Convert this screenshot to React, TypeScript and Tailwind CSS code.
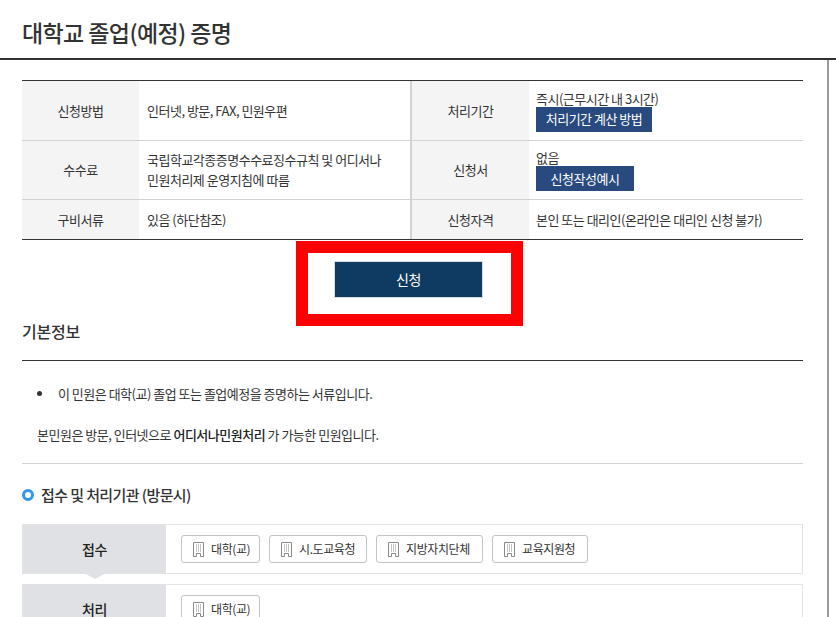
import type { ReactNode } from "react";

const fontStack = { fontFamily: '"Noto Sans CJK KR", "Noto Sans", sans-serif' };

const BuildingIcon = () => (
  <svg width="11" height="15" viewBox="0 0 11 15" fill="none" className="shrink-0">
    <path d="M0.5 14.5V0.5H10.5V14.5H7.5V11.5H3.5V14.5Z" stroke="#8a8a8a" />
    <path
      d="M3 3h1M5 3h1M7 3h1M3 5h1M5 5h1M7 5h1M3 7h1M5 7h1M7 7h1M3 9h1M5 9h1M7 9h1"
      stroke="#8a8a8a"
    />
  </svg>
);

const OrgButton = ({ label, width }: { label: string; width: string }) => (
  <div
    className={`flex h-[28px] items-center gap-[7px] rounded-[3px] border border-[#c4c4c4] bg-white pl-[11px] text-[12px] tracking-[-0.4px] text-[#333] ${width}`}
  >
    <BuildingIcon />
    <span className="leading-none">{label}</span>
  </div>
);

const InfoRow = ({
  height,
  leftLabel,
  left,
  rightLabel,
  right,
  last,
}: {
  height: string;
  leftLabel: string;
  left: ReactNode;
  rightLabel: string;
  right: ReactNode;
  last?: boolean;
}) => (
  <div className={`flex ${height} ${last ? "" : "border-b border-[#d2d2d2]"}`}>
    <div className="flex w-[117px] items-center justify-center bg-[#f4f4f4]">{leftLabel}</div>
    <div className="flex w-[273px] items-center border-r-2 border-[#d2d2d2] pl-[8px]">{left}</div>
    <div className="flex w-[117px] items-center justify-center bg-[#f4f4f4]">{rightLabel}</div>
    <div className="flex flex-1 items-center pl-[7px]">{right}</div>
  </div>
);

const NavyTag = ({ label, width }: { label: string; width: string }) => (
  <div
    className={`flex h-[25px] items-center justify-center bg-[#284a7e] text-[13px] text-white ${width}`}
  >
    {label}
  </div>
);

export default function App() {
  return (
    <div
      style={fontStack}
      className="relative h-[617px] w-[836px] overflow-hidden bg-white text-[13px] tracking-[-0.5px] text-[#333]"
    >
      <div className="flex h-[60px] items-start border-b-2 border-[#333] pl-[22px] pt-[14px]">
        <h1 className="text-[23px] leading-[36px] font-medium tracking-[-0.6px]">
          대학교 졸업(예정) 증명
        </h1>
      </div>

      <div className="h-[557px] w-[829px] border-r-2 border-[#9a9a9a] pl-[22px] pr-[24px] pt-[20px]">
        <div className="border-y border-[#333]">
          <InfoRow
            height="h-[60px]"
            leftLabel="신청방법"
            left="인터넷, 방문, FAX, 민원우편"
            rightLabel="처리기간"
            right={
              <div className="flex flex-col items-start">
                <span className="leading-[17px]">즉시(근무시간 내 3시간)</span>
                <NavyTag label="처리기간 계산 방법" width="w-[116px]" />
              </div>
            }
          />
          <InfoRow
            height="h-[59px]"
            leftLabel="수수료"
            left={
              <span className="leading-[20px]">
                국립학교각종증명수수료징수규칙 및 어디서나
                <br />
                민원처리제 운영지침에 따름
              </span>
            }
            rightLabel="신청서"
            right={
              <div className="flex flex-col items-start">
                <span className="leading-[17px]">없음</span>
                <NavyTag label="신청작성예시" width="w-[98px]" />
              </div>
            }
          />
          <InfoRow
            height="h-[39px]"
            leftLabel="구비서류"
            left="있음 (하단참조)"
            rightLabel="신청자격"
            right="본인 또는 대리인(온라인은 대리인 신청 불가)"
            last
          />
        </div>

        <div className="flex justify-center pt-[21px] pr-[8px]">
          <button className="h-[37px] w-[149px] border border-[#d5dbe2] bg-[#0f3a62] text-[14px] text-white">
            신청
          </button>
        </div>

        <h2 className="mt-[20px] h-[43px] border-b border-[#333] text-[16px] leading-[26px] font-medium tracking-[-0.2px]">
          기본정보
        </h2>

        <ul className="mt-[23px] flex items-center">
          <li className="flex items-center pl-[15px] leading-[19px]">
            <span className="mr-[16px] h-[5px] w-[5px] rounded-full bg-[#333]" />이 민원은 대학(교) 졸업
            또는 졸업예정을 증명하는 서류입니다.
          </li>
        </ul>
        <p className="mt-[22px] pl-[15px] leading-[19px]">
          본민원은 방문, 인터넷으로 <strong className="font-medium text-[#222]">어디서나민원처리</strong> 가
          가능한 민원입니다.
        </p>
        <div className="mt-[19px] h-px bg-[#d5d5d5]" />

        <div className="mt-[20px] flex items-center gap-[7px]">
          <span className="h-[12px] w-[12px] rounded-full border-[3px] border-[#2f96ed]" />
          <h3 className="text-[15px] leading-[22px] font-medium tracking-[-0.6px]">
            접수 및 처리기관 (방문시)
          </h3>
        </div>

        <div className="relative mt-[18px] flex h-[50px] border border-[#e3e3e3]">
          <div className="flex w-[143px] items-center justify-center bg-[#e0e1e5] text-[14px] font-medium text-[#222]">
            접수
          </div>
          <div className="flex items-center gap-[9px] pl-[15px]">
            <OrgButton label="대학(교)" width="w-[79px]" />
            <OrgButton label="시.도교육청" width="w-[98px]" />
            <OrgButton label="지방자치단체" width="w-[107px]" />
            <OrgButton label="교육지원청" width="w-[96px]" />
          </div>
          <span className="absolute top-full left-[61px] h-0 w-0 border-x-[11px] border-t-[6px] border-x-transparent border-t-[#e0e1e5]" />
        </div>

        <div className="mt-[10px] flex h-[50px] border border-[#e3e3e3]">
          <div className="flex w-[143px] items-center justify-center bg-[#e0e1e5] text-[14px] font-medium text-[#222]">
            처리
          </div>
          <div className="flex items-center pl-[15px]">
            <OrgButton label="대학(교)" width="w-[79px]" />
          </div>
        </div>
      </div>

      {/* red highlight drawn on top of the capture */}
      <div className="pointer-events-none absolute top-[241px] left-[296px] h-[85px] w-[227px] border-[12px] border-[#ff0000]" />
    </div>
  );
}
